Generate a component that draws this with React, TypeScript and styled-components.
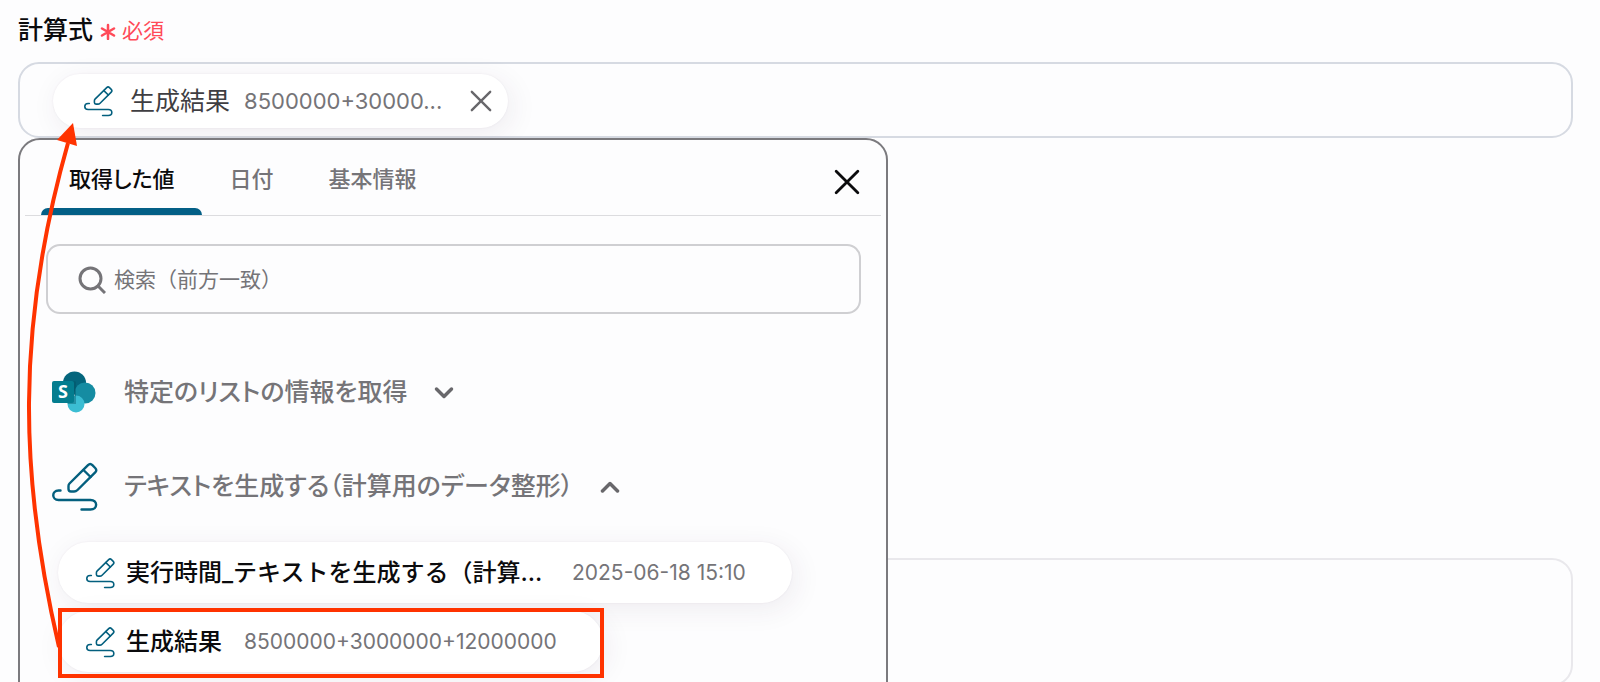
import React, { useState } from "react";
import styled, { createGlobalStyle } from "styled-components";

const GlobalStyle = createGlobalStyle`
  *, *::before, *::after { box-sizing: border-box; }
  body {
    margin: 0;
    background: #fdfdfe;
    color: #0b0b0d;
    font-family: Inter, "Noto Sans CJK JP", sans-serif;
  }
  button, input { font: inherit; color: inherit; }
  button { border: 0; padding: 0; margin: 0; background: none; cursor: pointer; text-align: left; }
`;

const Page = styled.main`
  position: relative;
  height: 100vh;
  overflow: hidden;
  padding: 12px 27px 0 18px;
`;

const LabelRow = styled.div`
  display: flex;
  align-items: center;
  gap: 7px;
  height: 36px;
  margin-bottom: 14px;
`;

const FieldLabel = styled.span`
  font-size: 25px;
  line-height: 36px;
  font-weight: 500;
`;

const Required = styled.span`
  display: flex;
  align-items: center;
  gap: 6px;
  padding-top: 2px;
  font-size: 21px;
  line-height: 36px;
  color: #ff4a58;
`;

const FieldArea = styled.div`
  position: relative;
`;

const Field = styled.div`
  display: flex;
  align-items: center;
  height: 76px;
  padding: 2px 33px 0;
  border: 2px solid #d6dae2;
  border-radius: 21px;
`;

const chipShadow = "4px 6px 28px rgba(60, 40, 80, 0.08), 0 0 2px rgba(60, 40, 80, 0.08)";

const FieldChip = styled.div`
  display: flex;
  align-items: center;
  height: 54px;
  padding: 0 16px 0 31px;
  border-radius: 27px;
  background: #fff;
  box-shadow: ${chipShadow};
`;

const ChipName = styled.span<{ $strong?: boolean; $fill?: boolean }>`
  width: ${(p) => (p.$fill ? "424px" : "auto")};
  margin-left: ${(p) => (p.$strong ? 11 : 17)}px;
  font-size: ${(p) => (p.$strong ? 24 : 25)}px;
  line-height: 36px;
  font-weight: ${(p) => (p.$strong ? 500 : 400)};
  color: ${(p) => (p.$strong ? "#0b0b0d" : "#3f3e42")};
  white-space: nowrap;
`;

const ChipValue = styled.span<{ $large?: boolean }>`
  margin-left: ${(p) => (p.$large ? 14 : 22)}px;
  font-size: ${(p) => (p.$large ? 22 : 21)}px;
  line-height: 36px;
  color: #757478;
  white-space: nowrap;
`;

const RemoveButton = styled.button`
  display: flex;
  margin-left: 28px;
`;

const Picker = styled.section`
  position: absolute;
  z-index: 1;
  top: 100%;
  left: 0;
  width: 870px;
  max-width: 100%;
  padding: 0 5px 80px;
  border: 2px solid #7b7a7e;
  border-radius: 22px;
  background: #fdfdfe;
`;

const PickerHead = styled.header`
  display: flex;
  align-items: center;
  justify-content: space-between;
  padding: 0 21px 0 16px;
  border-bottom: 1px solid #dcdcdf;
`;

const Tabs = styled.div`
  display: flex;
`;

const Tab = styled.button<{ $active: boolean }>`
  position: relative;
  height: 75px;
  padding: 2px 27px 0 28px;
  font-size: 22px;
  line-height: 32px;
  font-weight: 500;
  font-feature-settings: "palt";
  color: ${(p) => (p.$active ? "#0b0b0d" : "#757478")};

  &::after {
    content: "";
    position: absolute;
    inset: auto 0 0;
    height: 7px;
    border-radius: 7px 7px 0 0;
    background: ${(p) => (p.$active ? "#035f86" : "transparent")};
  }
`;

const CloseButton = styled.button`
  display: flex;
  margin-top: 8px;
`;

const SearchBox = styled.label`
  display: flex;
  align-items: center;
  gap: 8px;
  height: 70px;
  margin: 28px 20px 0 21px;
  padding: 2px 30px 0;
  border: 2px solid #cfcfd2;
  border-radius: 14px;
`;

const SearchInput = styled.input`
  flex: 1;
  min-width: 0;
  padding: 0;
  border: 0;
  outline: 0;
  background: none;
  font-size: 21px;
  line-height: 32px;

  &::placeholder { color: #757478; opacity: 1; }
`;

const Groups = styled.div`
  display: flex;
  flex-direction: column;
  gap: 46px;
  padding: 54px 27px 0;
`;

const GroupButton = styled.button`
  display: flex;
  align-items: center;
  height: 48px;
`;

const GroupIcon = styled.span`
  display: flex;
  width: 46px;
  margin-right: 26px;
`;

const GroupTitle = styled.span`
  margin-right: 27px;
  font-size: 25px;
  line-height: 36px;
  font-weight: 500;
  font-feature-settings: "palt";
  color: #757478;
  white-space: nowrap;
`;

const ValueList = styled.ul`
  display: flex;
  flex-direction: column;
  align-items: flex-start;
  gap: 8px;
  margin: 32px 0 0;
  padding: 0 33px;
  list-style: none;
`;

const ValueItem = styled.li`
  position: relative;
`;

const ValueChip = styled.button`
  display: flex;
  align-items: center;
  height: 61px;
  padding: 0 46px 0 28px;
  border-radius: 31px;
  background: #fff;
  box-shadow: ${chipShadow};
`;

const Highlight = styled.span`
  position: absolute;
  inset: -3px -1px -6px 0;
  border: 4px solid #ff3300;
  pointer-events: none;
`;

const NextCard = styled.section`
  height: 128px;
  margin-top: 420px;
  border: 2px solid #e9e8ec;
  border-radius: 21px;
`;

const ArrowLayer = styled.svg`
  position: absolute;
  z-index: 2;
  top: 0;
  left: 0;
  pointer-events: none;
`;

function PencilLine({ size, stroke }: { size: number; stroke: number }) {
  return (
    <svg width={size} height={size + 3} viewBox="0 0 46 49" fill="none" stroke="#035f7e" strokeWidth={stroke} strokeLinejoin="round" strokeLinecap="round" aria-hidden="true">
      <path d="M17.500 21.500 36 3.200Q38.200 1 40.400 3.200L43.200 6Q45.400 8.200 43.200 10.400L25.500 28Q24 29.500 22 29.500H19Q16.500 29.500 16.500 27V24Q16.500 22.500 17.500 21.500Z" />
      <path d="M31.500 8 38.600 15" />
      <path d="M8.500 28.500H6.500C-.5 28.500-.5 38 6.500 38H38.500C46 38 46 47.500 38.500 47.500H29.500" />
    </svg>
  );
}

function Cross({ size, stroke, color }: { size: number; stroke: number; color: string }) {
  return (
    <svg width={size} height={size} viewBox="0 0 24 24" fill="none" stroke={color} strokeWidth={stroke} strokeLinecap="round" aria-hidden="true">
      <path d="M2 2 22 22M22 2 2 22" />
    </svg>
  );
}

function Chevron({ up }: { up?: boolean }) {
  return (
    <svg width="20" height="14" viewBox="0 0 20 14" fill="none" stroke="#68676b" strokeWidth="3.500" strokeLinecap="round" strokeLinejoin="round" aria-hidden="true">
      <path d={up ? "M2.500 12 10 4.500 17.500 12" : "M2.500 4 10 11.500 17.500 4"} />
    </svg>
  );
}

function Asterisk() {
  return (
    <svg width="16" height="18" viewBox="0 0 16 18" fill="none" stroke="#ff4a58" strokeWidth="2.500" strokeLinecap="round" aria-hidden="true">
      <path d="M8 3V17M2 6.500 14 13.500M14 6.500 2 13.500" />
    </svg>
  );
}

function SearchIcon() {
  return (
    <svg width="28" height="28" viewBox="0 0 28 28" fill="none" stroke="#757478" strokeWidth="3" aria-hidden="true">
      <circle cx="12.500" cy="12.500" r="10.500" />
      <path d="M19.500 19.500 27 27" />
    </svg>
  );
}

const ListLogoText = styled.text`
  font-family: "Open Sans", sans-serif;
  font-size: 18px;
  font-weight: 700;
`;

function ListLogo() {
  return (
    <svg width="44" height="42" viewBox="0 0 44 42" aria-hidden="true">
      <circle cx="22.500" cy="12" r="11.500" fill="#04657c" />
      <circle cx="33" cy="22" r="10.500" fill="#158ca2" />
      <circle cx="24" cy="33" r="8.500" fill="#3bbdd3" />
      <path d="M12 10H22Q24 10 24 12V33H15.600A9 9 0 0 1 15.600 31H12Z" fill="#024f62" opacity=".4" />
      <rect y="10" width="22" height="22" rx="2" fill="#047d8f" />
      <ListLogoText x="11" y="27" textAnchor="middle" fill="#fff">S</ListLogoText>
    </svg>
  );
}

const TABS = ["取得した値", "日付", "基本情報"];

const VALUES = [
  { name: "実行時間_テキストを生成する（計算...", value: "2025-06-18 15:10", shortened: true, marked: false },
  { name: "生成結果", value: "8500000+3000000+12000000", shortened: false, marked: true },
];

export default function App() {
  const [tab, setTab] = useState(0);

  return (
    <Page lang="ja">
      <GlobalStyle />
      <LabelRow>
        <FieldLabel id="formula-label">計算式</FieldLabel>
        <Required>
          <Asterisk />
          必須
        </Required>
      </LabelRow>
      <FieldArea>
        <Field role="group" aria-labelledby="formula-label">
          <FieldChip>
            <PencilLine size={29} stroke={2.5} />
            <ChipName>生成結果</ChipName>
            <ChipValue $large>8500000+30000...</ChipValue>
            <RemoveButton type="button" aria-label="削除">
              <Cross size={22} stroke={2.6} color="#68676b" />
            </RemoveButton>
          </FieldChip>
        </Field>
        <Picker>
          <PickerHead>
            <Tabs role="tablist">
              {TABS.map((name, i) => (
                <Tab key={name} type="button" role="tab" aria-selected={tab === i} $active={tab === i} onClick={() => setTab(i)}>
                  {name}
                </Tab>
              ))}
            </Tabs>
            <CloseButton type="button" aria-label="閉じる">
              <Cross size={26} stroke={2.6} color="#0b0b0d" />
            </CloseButton>
          </PickerHead>
          <SearchBox>
            <SearchIcon />
            <SearchInput type="text" aria-label="検索" placeholder="検索（前方一致）" />
          </SearchBox>
          <Groups>
            <GroupButton type="button" aria-expanded="false">
              <GroupIcon><ListLogo /></GroupIcon>
              <GroupTitle>特定のリストの情報を取得</GroupTitle>
              <Chevron />
            </GroupButton>
            <GroupButton type="button" aria-expanded="true">
              <GroupIcon><PencilLine size={46} stroke={2.4} /></GroupIcon>
              <GroupTitle>テキストを生成する（計算用のデータ整形）</GroupTitle>
              <Chevron up />
            </GroupButton>
          </Groups>
          <ValueList>
            {VALUES.map((v) => (
              <ValueItem key={v.name}>
                <ValueChip type="button">
                  <PencilLine size={29} stroke={2.5} />
                  <ChipName $strong $fill={v.shortened}>{v.name}</ChipName>
                  <ChipValue>{v.value}</ChipValue>
                </ValueChip>
                {v.marked && <Highlight />}
              </ValueItem>
            ))}
          </ValueList>
        </Picker>
      </FieldArea>
      <NextCard />
      <ArrowLayer width="100" height="682" viewBox="0 0 100 682" aria-hidden="true">
        <path d="M59 647C20 480 15 330 68 143" fill="none" stroke="#ff3300" strokeWidth="4" />
        <path d="M73 123 57 140 77 146Z" fill="#ff3300" />
      </ArrowLayer>
    </Page>
  );
}
